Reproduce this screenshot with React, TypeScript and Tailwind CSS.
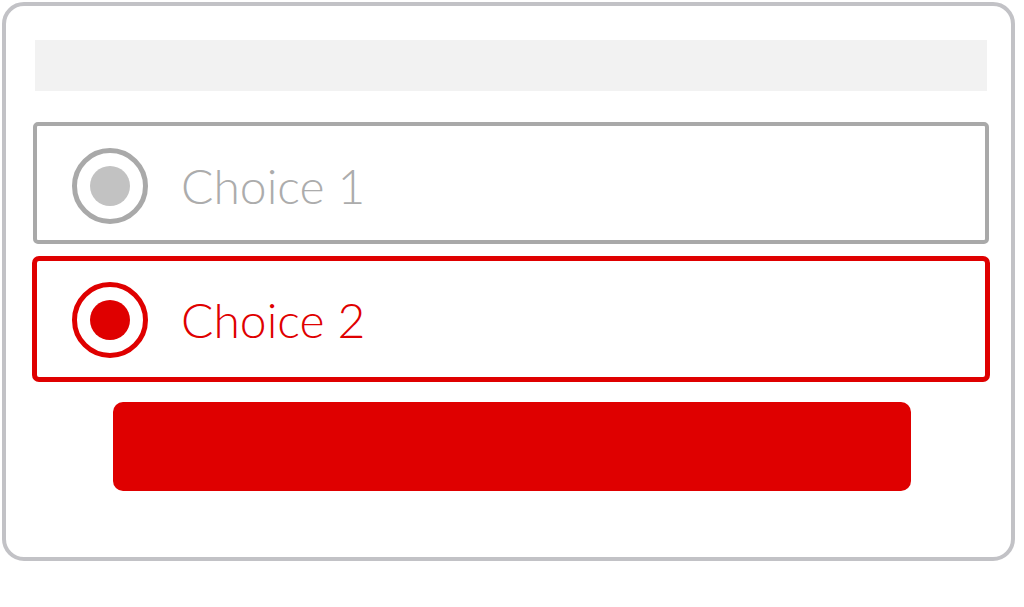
export default function App() {
  const choices = [
    { label: 'Choice 1', selected: false },
    { label: 'Choice 2', selected: true },
  ];

  return (
    <div className="w-[1024px] h-[607px] bg-white overflow-hidden" style={{ fontFamily: 'Lato, "Noto Sans", sans-serif' }}>
      <div className="ml-[2px] mt-[2px] w-[1013px] h-[559px] border-[4px] border-[#c2c2c6] rounded-[22px] bg-white flex flex-col">
        <div className="ml-[29px] mt-[34px] w-[952px] h-[51px] bg-[#f2f2f2]" />

        <div className="ml-[27px] mt-[31px] w-[956px] h-[122px] border-[4px] border-[#a9a9a9] rounded-[5px] flex items-center pl-[33px] pt-[6px]">
          <Radio selected={choices[0].selected} />
          <span className="ml-[31px] text-[48px] font-light leading-none text-[#acacac]">{choices[0].label}</span>
        </div>

        <div className="ml-[26px] mt-[12px] w-[958px] h-[126px] border-[5px] border-[#df0000] rounded-[7px] flex items-center pl-[33px] pt-[2px]">
          <Radio selected={choices[1].selected} />
          <span className="ml-[31px] text-[48px] font-light leading-none text-[#df0000]">{choices[1].label}</span>
        </div>

        <div className="ml-[107px] mt-[20px] w-[798px] h-[89px] rounded-[10px] bg-[#df0000]" />
      </div>
    </div>
  );
}

function Radio({ selected }: { selected: boolean }) {
  const ring = selected ? '#df0000' : '#a9a9a9';
  const dot = selected ? '#df0000' : '#c2c2c2';
  return (
    <svg width="80" height="80" viewBox="0 0 80 80" className="shrink-0">
      <circle cx="40" cy="40" r="35.5" fill="none" stroke={ring} strokeWidth="5" />
      <circle cx="40" cy="40" r="20" fill={dot} />
    </svg>
  );
}
